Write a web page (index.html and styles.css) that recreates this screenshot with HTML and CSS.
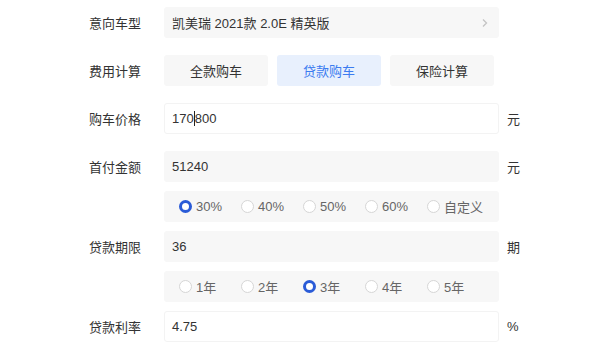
FILE: index.html
```html
<!DOCTYPE html>
<html lang="zh-CN">
<head>
<meta charset="utf-8">
<link rel="stylesheet" href="styles.css">
</head>
<body>
<div class="form">
  <div class="row">
    <div class="label">意向车型</div>
    <div class="field gray select">
      <span>凯美瑞 2021款 2.0E 精英版</span>
      <svg class="chev" width="8" height="10" viewBox="0 0 8 10"><path d="M2 1.5 L5.5 5 L2 8.5" fill="none" stroke="#c4c4c4" stroke-width="1.3"/></svg>
    </div>
  </div>
  <div class="row">
    <div class="label">费用计算</div>
    <div class="tabs">
      <div class="tab">全款购车</div>
      <div class="tab active">贷款购车</div>
      <div class="tab">保险计算</div>
    </div>
  </div>
  <div class="row">
    <div class="label">购车价格</div>
    <div class="field white"><span>170<span class="caret"></span>800</span></div>
    <div class="unit">元</div>
  </div>
  <div class="row tight">
    <div class="label">首付金额</div>
    <div class="field gray"><span>51240</span></div>
    <div class="unit">元</div>
  </div>
  <div class="row tight">
    <div class="label"></div>
    <div class="field gray radios">
      <div class="opt on"><i></i>30%</div>
      <div class="opt"><i></i>40%</div>
      <div class="opt"><i></i>50%</div>
      <div class="opt"><i></i>60%</div>
      <div class="opt"><i></i>自定义</div>
    </div>
  </div>
  <div class="row tight">
    <div class="label">贷款期限</div>
    <div class="field gray"><span>36</span></div>
    <div class="unit">期</div>
  </div>
  <div class="row tight">
    <div class="label"></div>
    <div class="field gray radios">
      <div class="opt"><i></i>1年</div>
      <div class="opt"><i></i>2年</div>
      <div class="opt on"><i></i>3年</div>
      <div class="opt"><i></i>4年</div>
      <div class="opt"><i></i>5年</div>
    </div>
  </div>
  <div class="row tight">
    <div class="label">贷款利率</div>
    <div class="field white"><span>4.75</span></div>
    <div class="unit">%</div>
  </div>
</div>
</body>
</html>
```
FILE: styles.css
```css
html, body {
  margin: 0;
  padding: 0;
  background: #fff;
}
body {
  font-family: "Liberation Sans", "Noto Sans CJK SC", sans-serif;
  font-size: 13px;
  color: #333;
}
.form {
  padding-top: 7px;
  display: flex;
  flex-direction: column;
  gap: 17px;
}
.row {
  display: flex;
  align-items: center;
  height: 31px;
}
.row.tight + .row.tight {
  margin-top: -8px;
}
.label {
  width: 75px;
  padding-left: 89px;
  color: #333;
  flex: none;
}
.field {
  width: 335px;
  height: 31px;
  box-sizing: border-box;
  border-radius: 3px;
  display: flex;
  align-items: center;
  padding-left: 8px;
  padding-right: 10px;
  flex: none;
}
.gray {
  background: #f7f7f7;
}
.white {
  background: #fff;
  border: 1px solid #f3f3f3;
  padding-left: 7px;
}
.select {
  justify-content: space-between;
}
.caret {
  display: inline-block;
  width: 1px;
  height: 15px;
  background: #222;
  vertical-align: -3px;
}
.unit {
  margin-left: 8px;
  color: #333;
}
.tabs {
  display: flex;
  gap: 9px;
  height: 31px;
}
.tab {
  width: 104px;
  height: 31px;
  border-radius: 3px;
  background: #f7f7f7;
  display: flex;
  align-items: center;
  justify-content: center;
  color: #333;
}
.tab.active {
  background: #e8f0fd;
  color: #3c7cf0;
}
.radios {
  padding-left: 15px;
}
.opt {
  width: 62px;
  flex: none;
  display: flex;
  align-items: center;
  color: #666;
}
.opt i {
  width: 13px;
  height: 13px;
  box-sizing: border-box;
  border-radius: 50%;
  border: 1px solid #d6d6d6;
  background: #fff;
  margin-right: 4px;
  flex: none;
}
.opt.on i {
  border: 3px solid #2a5bd7;
}
```
